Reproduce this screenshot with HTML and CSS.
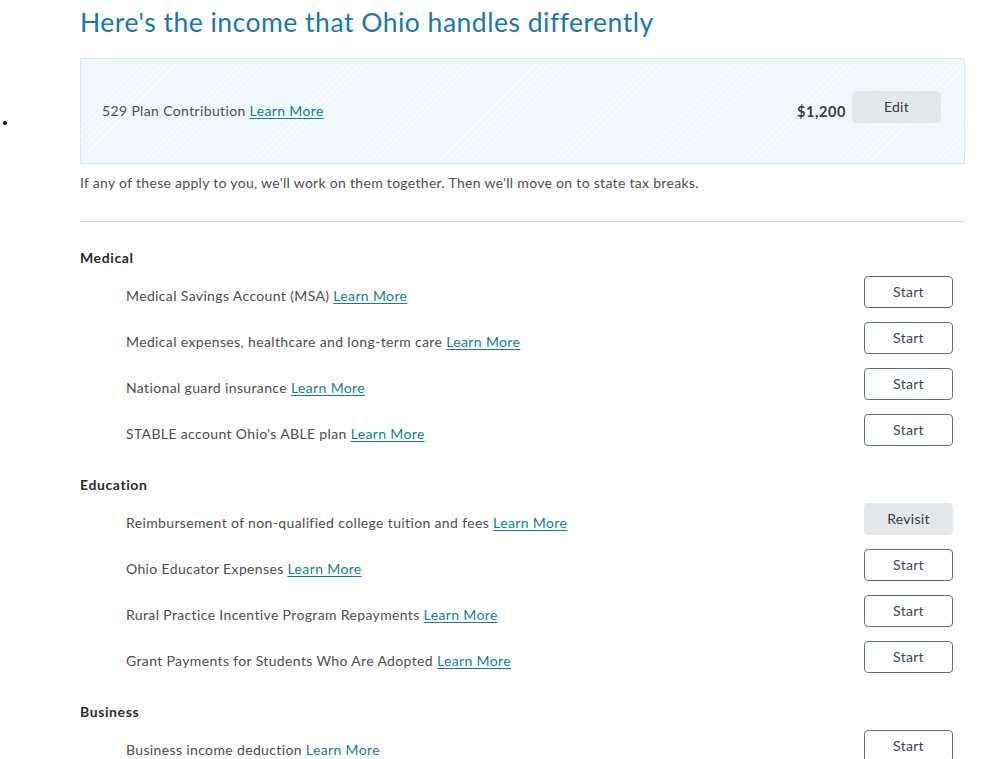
FILE: index.html
```html
<!DOCTYPE html>
<html>
<head>
<meta charset="utf-8">
<link rel="stylesheet" href="styles.css">
</head>
<body>
<div class="page">
  <h1 class="title">Here's the income that Ohio handles differently</h1>
  <div class="summary-row">
    <span class="dot"></span>
    <div class="summary">
      <div class="summary-label">529 Plan Contribution <a class="link" href="#">Learn More</a></div>
      <div class="summary-right">
        <span class="amount">$1,200</span>
        <button class="btn btn-grey btn-edit">Edit</button>
      </div>
    </div>
  </div>
  <p class="intro">If any of these apply to you, we'll work on them together. Then we'll move on to state tax breaks.</p>
  <hr class="rule">

  <section class="group">
    <h2 class="group-title">Medical</h2>
    <div class="item"><div class="item-label">Medical Savings Account (MSA) <a class="link" href="#">Learn More</a></div><button class="btn btn-outline">Start</button></div>
    <div class="item"><div class="item-label">Medical expenses, healthcare and long-term care <a class="link" href="#">Learn More</a></div><button class="btn btn-outline">Start</button></div>
    <div class="item"><div class="item-label">National guard insurance <a class="link" href="#">Learn More</a></div><button class="btn btn-outline">Start</button></div>
    <div class="item"><div class="item-label">STABLE account Ohio's ABLE plan <a class="link" href="#">Learn More</a></div><button class="btn btn-outline">Start</button></div>
  </section>

  <section class="group">
    <h2 class="group-title">Education</h2>
    <div class="item"><div class="item-label">Reimbursement of non-qualified college tuition and fees <a class="link" href="#">Learn More</a></div><button class="btn btn-grey">Revisit</button></div>
    <div class="item"><div class="item-label">Ohio Educator Expenses <a class="link" href="#">Learn More</a></div><button class="btn btn-outline">Start</button></div>
    <div class="item"><div class="item-label">Rural Practice Incentive Program Repayments <a class="link" href="#">Learn More</a></div><button class="btn btn-outline">Start</button></div>
    <div class="item"><div class="item-label">Grant Payments for Students Who Are Adopted <a class="link" href="#">Learn More</a></div><button class="btn btn-outline">Start</button></div>
  </section>

  <section class="group">
    <h2 class="group-title">Business</h2>
    <div class="item"><div class="item-label">Business income deduction <a class="link link-plain" href="#">Learn More</a></div><button class="btn btn-outline">Start</button></div>
  </section>
</div>
</body>
</html>
```

FILE: styles.css
```css
html, body {
  margin: 0;
  padding: 0;
  background: #ffffff;
}
body {
  font-family: Lato, "Noto Sans", sans-serif;
  color: #4d4d4d;
  font-size: 14px;
  letter-spacing: 0.36px;
  overflow: hidden;
}
.page {
  padding: 6px 33px 0 0;
}
.title {
  margin: 0 0 20px 80px;
  font-size: 26.5px;
  font-weight: 400;
  line-height: 32px;
  letter-spacing: 0.5px;
  color: #1479b1;
}
.summary-row {
  display: flex;
  align-items: flex-start;
}
.dot {
  width: 4px;
  height: 4px;
  border-radius: 50%;
  background: #111;
  margin: 63px 73px 0 3px;
  flex: none;
}
.summary {
  flex: 1;
  height: 104px;
  border: 1px solid #d4ebf3;
  background-color: #eef7fc;
  background-image: repeating-linear-gradient(135deg, rgba(255,255,255,0.55) 0 1px, rgba(255,255,255,0) 1px 5px);
  display: flex;
  align-items: center;
  justify-content: space-between;
  padding: 0 23px 0 21px;
}
.summary-label {
  line-height: 20px;
  margin-top: 0;
}
.summary-right {
  display: flex;
  align-items: center;
  gap: 6px;
  margin-top: -8px;
}
.amount {
  font-weight: 700;
  font-size: 14.5px;
  letter-spacing: 0.6px;
  color: #393a3d;
  margin-top: 8px;
}
.link {
  color: #0f7f91;
  text-decoration: underline;
  text-underline-offset: 2px;
}
.link-plain {
  text-decoration: none;
}
.intro {
  margin: 9px 0 0 80px;
  line-height: 20px;
  letter-spacing: 0.3px;
}
.rule {
  margin: 28px 0 0 80px;
  border: 0;
  border-top: 1px solid #d8d8d8;
  height: 0;
}
.group {
  margin-left: 80px;
  padding-top: 26px;
}
.group + .group {
  padding-top: 29px;
}
.group-title {
  margin: 0 0 8px 0;
  font-size: 14px;
  font-weight: 700;
  line-height: 20px;
  letter-spacing: 0.6px;
  color: #2b2b2b;
}
.item {
  display: flex;
  align-items: flex-start;
  justify-content: space-between;
  padding-left: 46px;
  margin-right: 12px;
}
.item + .item {
  margin-top: 14px;
}
.item-label {
  line-height: 20px;
  padding-top: 10px;
}
.btn {
  font-family: Lato, "Noto Sans", sans-serif;
  font-size: 14px;
  letter-spacing: 0.3px;
  width: 89px;
  height: 32px;
  border-radius: 4px;
  padding: 0 0 2px 0;
  cursor: pointer;
  flex: none;
}
.btn-outline {
  background: #ffffff;
  border: 1px solid #5f7181;
  color: #2f4a5c;
}
.btn-grey {
  background: #e3e7ea;
  border: 1px solid #e3e7ea;
  color: #393a3d;
}
```
